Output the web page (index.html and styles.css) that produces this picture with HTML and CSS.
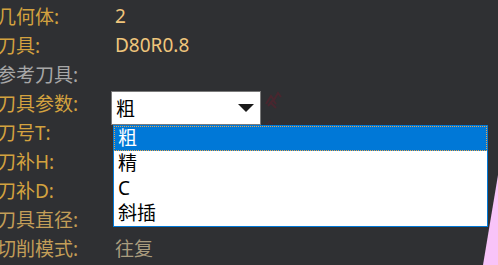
FILE: index.html
```html
<!DOCTYPE html>
<html lang="zh">
<head>
  <meta charset="UTF-8" />
  <title>刀具参数</title>
  <link rel="stylesheet" href="styles.css">
</head>
<body>
  <div class="form">
    <div class="row"><span class="label">几何体:</span><span class="value">2</span></div>
    <div class="row"><span class="label">刀具:</span><span class="value">D80R0.8</span></div>
    <div class="row"><span class="label grey">参考刀具:</span><span class="value"></span></div>
    <div class="row">
      <span class="label">刀具参数:</span>
      <div class="select-wrap">
        <div class="select">
          <span>粗</span>
          <span class="arrow"></span>
        </div>
        <svg class="scribble" width="24" height="42" viewBox="0 0 24 42">
          <path d="M5 16 L10 8 L13 12 L17 5 L20 9 M7 18 L12 12 L15 16 M9 14 L15 20" stroke="#5e1f2c" stroke-width="2" fill="none" opacity="0.55"/>
          <path d="M4 38 L9 33 L12 37" stroke="#5e1f2c" stroke-width="1.5" fill="none" opacity="0.35"/>
        </svg>
        <ul class="dropdown">
          <li class="selected">粗</li>
          <li>精</li>
          <li>C</li>
          <li>斜插</li>
        </ul>
      </div>
    </div>
    <div class="row"><span class="label">刀号T:</span><span class="value"></span></div>
    <div class="row"><span class="label">刀补H:</span><span class="value"></span></div>
    <div class="row"><span class="label">刀补D:</span><span class="value"></span></div>
    <div class="row"><span class="label muted">刀具直径:</span><span class="value"></span></div>
    <div class="row"><span class="label muted">切削模式:</span><span class="value dim">往复</span></div>
  </div>

  <svg class="corner" width="16" height="90" viewBox="0 0 16 90">
    <polygon points="16,0 16,90 1,90" fill="#f8c3f8"/>
  </svg>
</body>
</html>
```

FILE: styles.css
```css
body {
  margin: 0;
  padding: 0;
  background-color: #2f3033;
  font-family: "Noto Sans", "Noto Sans CJK SC", sans-serif;
  font-size: 19px;
  width: 498px;
  height: 265px;
  overflow: hidden;
  position: relative;
}

.form {
  margin-left: -3px;
  padding-top: 1px;
}

.row {
  display: flex;
  align-items: center;
  height: 29px;
}

.label {
  flex: 0 0 118px;
  color: #d3a23f;
  white-space: nowrap;
}

.label.grey {
  color: #a7a7a7;
}

.label.muted {
  color: #c39e58;
}

.value {
  color: #efc57c;
}

.value.dim {
  color: #a99c7e;
}

.select-wrap {
  position: relative;
  align-self: flex-start;
  margin-top: 3px;
  height: 34px;
}

.select {
  margin-left: -4px;
  width: 138px;
  height: 32px;
  border: 1px solid #7a7a7a;
  background-color: #fff;
  color: #000;
  display: flex;
  align-items: center;
  justify-content: space-between;
  padding: 0 6px 0 4px;
}

.arrow {
  width: 0;
  height: 0;
  border-left: 8px solid transparent;
  border-right: 8px solid transparent;
  border-top: 8px solid #1a1a1a;
}

.scribble {
  position: absolute;
  left: 146px;
  top: -3px;
}

.dropdown {
  position: absolute;
  left: -2px;
  top: 34px;
  width: 373px;
  margin: 0;
  padding: 0;
  list-style: none;
  background-color: #fff;
  border: 1px solid #0078d7;
  z-index: 5;
}

.dropdown li {
  box-sizing: border-box;
  height: 25px;
  line-height: 23px;
  padding-left: 3px;
  color: #000;
  border: 1px solid transparent;
}

.dropdown li.selected {
  background-color: #0078d7;
  color: #fff;
  border: 1px dotted #e9a64a;
}

.corner {
  position: absolute;
  right: 0;
  bottom: 0;
}
```
